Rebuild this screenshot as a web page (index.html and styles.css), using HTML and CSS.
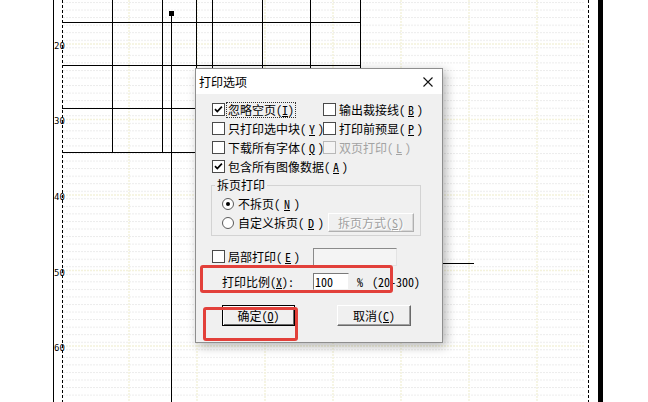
FILE: index.html
```html
<!DOCTYPE html>
<html lang="zh-CN">
<head>
  <meta charset="UTF-8">
  <title>打印选项</title>
  <link rel="stylesheet" href="styles.css">
</head>
<body>
  <!-- 背景图纸 -->
  <svg class="sheet" width="648" height="402" viewBox="0 0 648 402">
    <defs>
      <pattern id="minor" width="3" height="7.55" patternUnits="userSpaceOnUse" y="2">
        <rect width="2" height="1" fill="#ececec"/>
      </pattern>
    </defs>
    <rect x="63" y="0" width="522" height="402" fill="url(#minor)"/>
    <g class="major">
      <line x1="129" y1="0" x2="129" y2="402"/>
      <line x1="197" y1="0" x2="197" y2="402"/>
      <line x1="265" y1="0" x2="265" y2="402"/>
      <line x1="333" y1="0" x2="333" y2="402"/>
      <line x1="401" y1="0" x2="401" y2="402"/>
      <line x1="469" y1="0" x2="469" y2="402"/>
      <line x1="537" y1="0" x2="537" y2="402"/>
      <line x1="63" y1="44" x2="585" y2="44"/>
      <line x1="63" y1="119.5" x2="585" y2="119.5"/>
      <line x1="63" y1="195" x2="585" y2="195"/>
      <line x1="63" y1="270.5" x2="585" y2="270.5"/>
      <line x1="63" y1="346" x2="585" y2="346"/>
    </g>
    <g class="ink">
      <line x1="53.5" y1="0" x2="53.5" y2="402"/>
      <line class="dash" x1="62.5" y1="0" x2="62.5" y2="402"/>
      <line class="dash" x1="588.5" y1="0" x2="588.5" y2="402"/>
      <line x1="62" y1="22.5" x2="361" y2="22.5"/>
      <line x1="62" y1="65.5" x2="361" y2="65.5"/>
      <line x1="62" y1="108.5" x2="210" y2="108.5"/>
      <line x1="62" y1="152.5" x2="210" y2="152.5"/>
      <line x1="300" y1="263.5" x2="474" y2="263.5"/>
      <line x1="112.5" y1="0" x2="112.5" y2="152"/>
      <line x1="162.5" y1="0" x2="162.5" y2="152"/>
      <line x1="171.5" y1="14" x2="171.5" y2="402"/>
      <line x1="196.5" y1="0" x2="196.5" y2="80"/>
      <line x1="212.5" y1="0" x2="212.5" y2="80"/>
      <line x1="262.5" y1="0" x2="262.5" y2="80"/>
      <line x1="310.5" y1="0" x2="310.5" y2="80"/>
      <line x1="360.5" y1="0" x2="360.5" y2="80"/>
    </g>
    <rect x="169" y="11" width="5" height="5" fill="#000"/>
    <rect x="598" y="0" width="5" height="402" fill="#000"/>
    <g class="ruler">
      <text x="54" y="49">20</text>
      <text x="54" y="124">30</text>
      <text x="54" y="200">40</text>
      <text x="54" y="276">50</text>
      <text x="54" y="351">60</text>
    </g>
  </svg>

  <div class="dialog">
    <div class="titlebar">
      <span class="title">打印选项</span>
      <svg class="close" width="10" height="10" viewBox="0 0 10 10">
        <path d="M0.5 0.5L9.5 9.5M9.5 0.5L0.5 9.5" stroke="#111" stroke-width="1.1" fill="none"/>
      </svg>
    </div>

    <div class="dialog-body">
      <div class="opts">
        <label class="check">
          <span class="box"><svg width="11" height="11" viewBox="0 0 11 11"><path d="M2 5.2l2.3 2.4 4.6-5" stroke="#000" stroke-width="1.7" fill="none"/></svg></span>
          <span class="focus">忽略空页(<u>I</u>)</span>
        </label>
        <label class="check"><span class="box"></span>输出裁接线(<u>B</u>)</label>
        <label class="check"><span class="box"></span>只打印选中块(<u>Y</u>)</label>
        <label class="check"><span class="box"></span>打印前预显(<u>P</u>)</label>
        <label class="check"><span class="box"></span>下载所有字体(<u>Q</u>)</label>
        <label class="check disabled"><span class="box"></span>双页打印(<u>L</u>)</label>
        <label class="check wide">
          <span class="box"><svg width="11" height="11" viewBox="0 0 11 11"><path d="M2 5.2l2.3 2.4 4.6-5" stroke="#000" stroke-width="1.7" fill="none"/></svg></span>
          包含所有图像数据(<u>A</u>)
        </label>
      </div>

      <fieldset class="group">
        <legend>拆页打印</legend>
        <div class="radio-row"><span class="radio on"></span>不拆页(<u>N</u>)</div>
        <div class="radio-row">
          <span class="radio"></span>自定义拆页(<u>D</u>)
          <button class="btn btn-split" disabled>拆页方式(<u>S</u>)</button>
        </div>
      </fieldset>

      <div class="part-row">
        <label class="check part"><span class="box"></span>局部打印(<u>E</u>)</label>
        <span class="edit"></span>
      </div>

      <div class="scale-row">
        <span class="scale-label">打印比例(<u>X</u>):</span>
        <span class="num">100</span>
        <span class="pct">%</span>
        <span class="range">(20-300)</span>
      </div>

      <div class="btn-row">
        <button class="btn btn-ok">确定(<u>O</u>)</button>
        <button class="btn btn-cancel">取消(<u>C</u>)</button>
      </div>
    </div>
  </div>

  <!-- 红色标注框 -->
  <div class="mark mark-scale"></div>
  <div class="mark mark-ok"></div>
</body>
</html>
```

FILE: styles.css
```css
body {
  margin: 0;
  width: 648px;
  height: 402px;
  overflow: hidden;
  position: relative;
  background: #fff;
  font-family: "Noto Sans Mono CJK SC", "Noto Sans CJK SC", sans-serif;
  font-size: 12px;
  color: #000;
}

.sheet {
  display: block;
}

.sheet .major line {
  stroke: #f4f2dc;
  stroke-width: 1.5;
  stroke-dasharray: 2 1;
}

.sheet .ink line {
  stroke: #000;
  stroke-width: 1;
}

.sheet .ink .dash {
  stroke-dasharray: 3 2;
}

.sheet .ruler text {
  font-family: "DejaVu Sans Mono", monospace;
  font-size: 9px;
  fill: #000;
}

/* 对话框 */
.dialog {
  position: absolute;
  left: 195px;
  top: 68px;
  width: 248px;
  height: 275px;
  box-sizing: border-box;
  border: 1px solid #8e8e8e;
  background: #f0f0f0;
  box-shadow: 3px 3px 10px rgba(0, 0, 0, 0.3);
}

.titlebar {
  height: 25px;
  background: #fff;
  display: flex;
  align-items: center;
  padding: 0 9px 0 3px;
}

.title {
  flex: 1;
  font-family: "Noto Sans CJK SC", sans-serif;
  font-size: 12px;
}

.close {
  display: block;
}

.dialog-body {
  padding: 6px 0 0 16px;
}

u {
  text-decoration: underline;
  text-underline-offset: 1px;
}

.opts {
  display: grid;
  grid-template-columns: 111px 1fr;
  grid-auto-rows: 19px;
}

.opts .wide {
  grid-column: 1 / 3;
}

.check {
  display: flex;
  align-items: center;
  gap: 3px;
  white-space: nowrap;
  line-height: 14px;
}

.box {
  width: 13px;
  height: 13px;
  box-sizing: border-box;
  border: 1px solid #4a4a4a;
  background: #fff;
  flex: none;
}

.box svg {
  display: block;
}

.focus {
  outline: 1px dotted #333;
  outline-offset: 0;
  padding: 0 1px;
  margin-left: -1px;
}

.check.disabled {
  color: #a3a3a3;
}

.check.disabled .box {
  border-color: #b8b8b8;
  background: #f4f4f4;
}

/* 拆页打印 */
.group {
  margin: 2px 0 0 -1px;
  padding: 2px 6px 3px 10px;
  width: 210px;
  box-sizing: border-box;
  border: 1px solid #d3d3d3;
  min-width: 0;
}

.group legend {
  padding: 0 2px;
  margin-left: -7px;
  line-height: 14px;
}

.radio-row {
  display: flex;
  align-items: center;
  gap: 4px;
  height: 19px;
  white-space: nowrap;
}

.radio {
  width: 12px;
  height: 12px;
  box-sizing: border-box;
  border-radius: 50%;
  border: 1px solid #5a5a5a;
  background: #fff;
  flex: none;
  display: flex;
  align-items: center;
  justify-content: center;
}

.radio.on::after {
  content: "";
  width: 4px;
  height: 4px;
  border-radius: 50%;
  background: #000;
}

.btn {
  font-family: inherit;
  font-size: 12px;
  color: #000;
  background: #f0f0f0;
  padding: 0;
  margin: 0;
  box-sizing: border-box;
  border: 1px solid;
  border-color: #fff #696969 #696969 #fff;
  box-shadow: inset -1px -1px #a0a0a0;
  line-height: 14px;
}

.btn-split {
  margin-left: auto;
  width: 89px;
  height: 19px;
  color: #a0a0a0;
  text-shadow: 1px 1px #fff;
  border-color: #fff #b0b0b0 #b0b0b0 #fff;
  box-shadow: inset -1px -1px #d8d8d8;
}

/* 局部打印 */
.part-row {
  display: flex;
  align-items: center;
  margin-top: 11px;
  height: 19px;
}

.check.part {
  width: 101px;
}

.edit {
  width: 84px;
  height: 18px;
  box-sizing: border-box;
  border: 1px solid;
  border-color: #8a8a8a #e3e3e3 #e3e3e3 #8a8a8a;
  background: #f4f4f4;
}

.scale-row {
  display: flex;
  align-items: center;
  margin-top: 6px;
  height: 18px;
  padding-left: 10px;
  white-space: nowrap;
}

.scale-label {
  width: 91px;
}

.num {
  width: 36px;
  height: 17px;
  box-sizing: border-box;
  border: 1px solid;
  border-color: #7a7a7a #f0f0f0 #f0f0f0 #7a7a7a;
  background: #fff;
  padding-left: 1px;
  line-height: 15px;
}

.pct {
  margin-left: 8px;
}

.range {
  margin-left: 9px;
}

.btn-row {
  display: flex;
  gap: 42px;
  margin-top: 15px;
  padding-left: 10px;
}

.btn-ok,
.btn-cancel {
  width: 74px;
  height: 21px;
}

.btn-ok {
  width: 73px;
  border-color: #000;
  box-shadow: inset 1px 1px #fff, inset -1px -1px #696969;
}

/* 标注 */
.mark {
  position: absolute;
  border: 3px solid #e2403a;
  border-radius: 3px;
  box-sizing: border-box;
}

.mark-scale {
  left: 200px;
  top: 265px;
  width: 193px;
  height: 28px;
}

.mark-ok {
  left: 203px;
  top: 307px;
  width: 95px;
  height: 34px;
}
```
